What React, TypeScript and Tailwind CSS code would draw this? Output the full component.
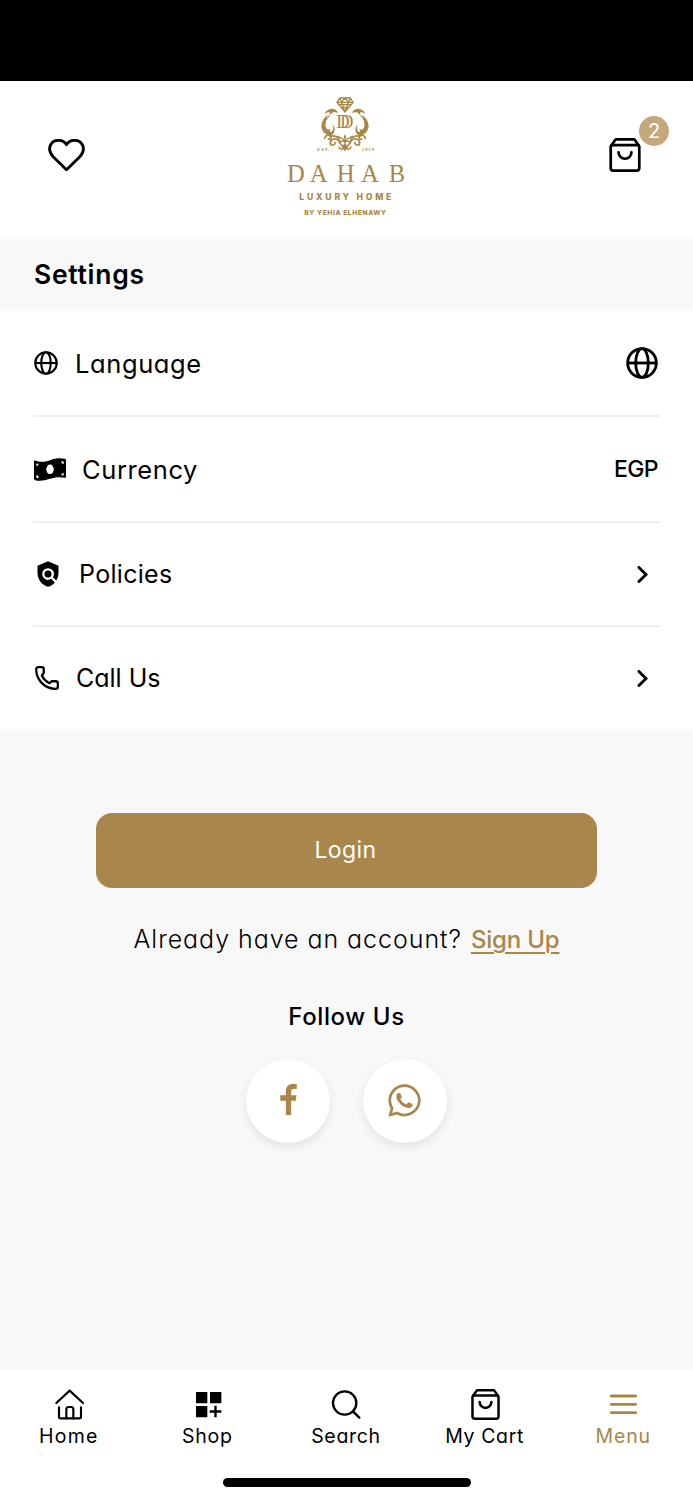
import React from 'react';
import { Phone } from 'lucide-react';
import { FaWhatsapp } from 'react-icons/fa';
import { MdPolicy } from 'react-icons/md';

interface IconProps {
  className?: string;
}

const HeartIcon = ({ className }: IconProps) => (
  <svg viewBox="0 0 110 96" fill="none" stroke="currentColor" strokeWidth="8.5" strokeLinejoin="round" className={className}>
    <path d="M55 92 15 53C-6 30 7 4 32 4c10 0 18 5 23 13C60 9 68 4 78 4c25 0 38 26 17 49Z" />
  </svg>
);

const BagIcon = ({ className }: IconProps) => (
  <svg viewBox="0 0 92 100" fill="none" stroke="currentColor" strokeWidth="8" strokeLinecap="round" strokeLinejoin="round" className={className}>
    <path d="M4 25v63a8 8 0 0 0 8 8h68a8 8 0 0 0 8-8V25L75 6q-1-2-4-2H21q-3 0-4 2Z" />
    <path d="M6 21h80M27 42a19 19 0 0 0 38 0" />
  </svg>
);

const GlobeIcon = ({ className }: IconProps) => (
  <svg viewBox="0 0 96 96" fill="none" stroke="currentColor" strokeWidth="8.5" className={className}>
    <circle cx="48" cy="48" r="43" />
    <ellipse cx="48" cy="48" rx="19" ry="43" />
    <path d="M5 48h86" />
  </svg>
);

const BillIcon = ({ className }: IconProps) => (
  <svg viewBox="0 0 94 67" className={className}>
    <path d="M2 7c18 6 29 4 45-1C64 0 76-1 91 2q3 1 3 4v49q0 4-4 3c-16-3-27-2-43 3-17 5-29 8-44 4q-3-1-3-4V9q0-3 2-2Z" fill="currentColor" />
    <ellipse cx="47" cy="33" rx="11" ry="14" fill="#fff" />
    <path d="M7 16q4 1 7 0 0 6-7 8ZM80 10q3-1 7 0v8q-7-1-7-8ZM7 50q7 1 7 8-4 1-7 0ZM87 43v8q-4-1-7 0 0-6 7-8Z" fill="#fff" />
  </svg>
);

const ChevronIcon = () => (
  <svg viewBox="0 0 30 48" fill="none" stroke="currentColor" strokeWidth="8" strokeLinecap="round" className="mr-3 h-[17px] w-[11px]">
    <path d="m5 4 20 20L5 44" />
  </svg>
);

const FacebookIcon = ({ className }: IconProps) => (
  <svg viewBox="0 0 50 94" fill="currentColor" className={className}>
    <path d="M17 94V51H0V34h17V23C17 8 25 0 39 0h11v15h-8c-7 0-9 3-9 9v10h16l-2 17H33v43Z" />
  </svg>
);

const HomeIcon = ({ className }: IconProps) => (
  <svg viewBox="0 0 108 108" fill="none" stroke="currentColor" strokeWidth="6.5" strokeLinecap="round" strokeLinejoin="round" className={className}>
    <path d="m16 51 40-37 40 37M24 64v28q0 5 5 5h56q5 0 5-5V64" />
    <path d="M46 97V70q0-7 7-7h7q7 0 7 7v27" />
  </svg>
);

const ShopIcon = ({ className }: IconProps) => (
  <svg viewBox="0 0 108 108" fill="currentColor" className={className}>
    <path d="M18 18h34v34H18zM60 18h34v34H60zM18 60h34v34H18zM73 59h7v14h14v7H80v14h-7V80H59v-7h14z" />
  </svg>
);

const SearchIcon = ({ className }: IconProps) => (
  <svg viewBox="0 0 108 108" fill="none" stroke="currentColor" strokeWidth="7" strokeLinecap="round" className={className}>
    <circle cx="50" cy="51" r="35" />
    <path d="m75 76 19 19" />
  </svg>
);

const CartIcon = ({ className }: IconProps) => (
  <span className={`flex items-center justify-center ${className}`}>
    <BagIcon className="h-[31px] w-[29px]" />
  </span>
);

const MenuIcon = ({ className }: IconProps) => (
  <svg viewBox="0 0 108 108" fill="none" stroke="currentColor" strokeWidth="8.5" strokeLinecap="round" className={className}>
    <path d="M16 30h73M16 55h73M16 80h73" />
  </svg>
);

// one side of the wreath, drawn again mirrored for the other side
const Scroll = () => (
  <g>
    <path d="M205 84c-5-9-14-14-24-12-9 2-14 8-17 15 6-5 11-6 16-5-3 3-1 7 3 7 1-5 4-7 9-7 5-1 9 0 13 2Z" />
    <path d="M175 88c-12 9-20 20-20 34 0 12 7 20 17 21 7 0 11-6 8-12-3 4-8 4-11-1-5-8-3-27 6-42Z" />
    <path d="M154 119c1 20 11 31 27 31 9 0 12-9 7-15-1 6-7 8-14 4-8-4-14-10-20-20Z" />
    <path d="M187 118c9 10 9 23 0 30-6 5-13 5-19 3 11-1 18-7 20-14 2-6 1-12-1-19Z" />
    <g fill="none" stroke="#a98645" strokeLinecap="round">
      <path d="M178 91q-15 16-16 34" strokeWidth="3" />
      <path d="M164 160c1-9 11-12 17-7 5 5 0 12-6 9M180 154c12-4 25 1 28 12" strokeWidth="5" />
      <path d="M183 180c-6-11 5-22 17-17 12 4 12 21 22 26M183 179c6 4 13 0 12-7" strokeWidth="5" />
      <path d="M203 154c7 7 18 4 22 14M208 173c6-7 13-6 17-1M207 186c2 9 12 8 15 1" strokeWidth="4.5" />
    </g>
    <path d="M225 174c-8 5-8 17 0 24ZM225 148c-5 6-4 12 0 16Z" />
  </g>
);

const Logo = () => (
  <svg viewBox="0 0 450 420" className="h-[140px] w-[150px]" fill="#a98645">
    <g fill="none" stroke="#a98645" strokeWidth="4">
      <path d="M209 39h32l8 13-24 29-24-29ZM201 52h48M209 39l5 13 11-13 11 13 5-13M214 52l11 28 11-28M207 59h36M213 67h24" />
    </g>
    <Scroll />
    <g transform="translate(450 0) scale(-1 1)">
      <Scroll />
    </g>
    <text x="199 210" y="130" fontFamily="Liberation Serif, serif" fontSize="56">
      DD
    </text>
    <text x="142" y="199" textLength="37" fontFamily="Liberation Serif, serif" fontSize="14" fontWeight="700">EST.</text>
    <text x="275" y="199" textLength="37" fontFamily="Liberation Serif, serif" fontSize="14" fontWeight="700">1959</text>
    <text x="51 119 200 273 356" y="291" fontFamily="Liberation Serif, serif" fontSize="74">DAHAB</text>
    <text x="88" y="345" textLength="276" fontFamily="Inter, sans-serif" fontSize="26" fontWeight="800">LUXURY HOME</text>
    <text x="103" y="389" textLength="245" fontFamily="Inter, sans-serif" fontSize="20" fontWeight="800">BY YEHIA ELHENAWY</text>
  </svg>
);

const SETTINGS = [
  {
    label: 'Language',
    icon: <GlobeIcon className="mr-[17px] ml-px size-6" />,
    row: 'h-[106px] border-b-2',
    text: 'text-[25.5px] tracking-[0.6px]',
    value: <GlobeIcon className="mr-0.5 size-8" />,
  },
  {
    label: 'Currency',
    icon: <BillIcon className="mr-4 ml-px h-[23px] w-8" />,
    row: 'h-[106px] border-b-2',
    text: 'text-[25.5px] tracking-[0.6px]',
    value: <span className="mr-0.5 text-[23px] font-medium tracking-[-0.6px]">EGP</span>,
  },
  {
    label: 'Policies',
    icon: <MdPolicy className="mr-[17px] ml-px size-7" />,
    row: 'h-[104px] border-b-2',
    text: 'text-[25px] tracking-[0.3px]',
    value: <ChevronIcon />,
  },
  {
    label: 'Call Us',
    icon: <Phone strokeWidth={2.1} className="mr-4 ml-px size-[26px]" />,
    row: 'h-[102px]',
    text: 'text-[25px]',
    value: <ChevronIcon />,
  },
];

const TABS = [
  { label: 'Home', Icon: HomeIcon, color: 'text-black', text: 'tracking-[1.2px]' },
  { label: 'Shop', Icon: ShopIcon, color: 'text-black', text: 'tracking-[0.8px]' },
  { label: 'Search', Icon: SearchIcon, color: 'text-black', text: 'tracking-[0.7px]' },
  { label: 'My Cart', Icon: CartIcon, color: 'text-black', text: 'tracking-[0.6px]' },
  { label: 'Menu', Icon: MenuIcon, color: 'text-[#a9864b]', text: 'tracking-[0.8px]' },
];

export default function App() {
  return (
    <div className="flex h-[1500px] w-[693px] flex-col overflow-hidden bg-[#f8f8f8] font-[Inter,sans-serif] text-black [font-feature-settings:'cv11']">
      <div className="h-[81px] shrink-0 bg-black" />

      {/* Header */}
      <header className="flex h-[158px] shrink-0 items-start justify-between bg-white pr-[52px] pl-12">
        <HeartIcon className="mt-[58px] h-8 w-[37px]" />
        <div className="mt-1 mr-[5px]">
          <Logo />
        </div>
        <button className="relative mt-[57px]">
          <BagIcon className="h-[34px] w-8" />
          <span className="absolute -top-[22px] -right-7 flex size-[30px] items-center justify-center rounded-full bg-[#c5a77c] text-[20px] text-white">
            2
          </span>
        </button>
      </header>

      <h1 className="flex h-[72px] shrink-0 items-center pl-[34px] text-[26.5px] font-semibold tracking-[0.7px]">Settings</h1>

      {/* Settings list */}
      <section className="bg-white px-[33px]">
        {SETTINGS.map((item) => (
          <div key={item.label} className={`flex items-center justify-between border-[#efefef] ${item.row}`}>
            <div className="flex items-center">
              {item.icon}
              <span className={`pt-0.5 ${item.text}`}>{item.label}</span>
            </div>
            {item.value}
          </div>
        ))}
      </section>

      {/* Account */}
      <main className="flex flex-1 flex-col items-center">
        <button className="mt-[84px] h-[75px] w-[501px] rounded-2xl bg-[#a9864b] pr-0.5 text-[23px] tracking-[0.4px] text-white">
          Login
        </button>
        <p className="mt-[34px] flex h-9 items-center gap-[9px] text-[25px] font-light">
          <span className="tracking-[0.95px]">Already have an account?</span>
          <a className="text-[24px] font-medium tracking-[-0.2px] text-[#a9864b] underline decoration-2 underline-offset-4">Sign Up</a>
        </p>
        <h2 className="mt-[41px] flex h-9 items-center text-[24px] font-medium tracking-[0.6px]">Follow Us</h2>
        <div className="mt-6 flex gap-[33px] text-[#a9864b]">
          <a className="flex size-[84px] items-center justify-center rounded-full bg-white shadow-[0_4px_10px_rgba(0,0,0,0.09)]">
            <FacebookIcon className="mb-1 h-[31px] w-[17px]" />
          </a>
          <a className="flex size-[84px] items-center justify-center rounded-full bg-white shadow-[0_4px_10px_rgba(0,0,0,0.09)]">
            <FaWhatsapp className="mr-0.5 mb-0.5 size-[37px]" />
          </a>
        </div>
      </main>

      {/* Bottom navigation */}
      <nav className="h-[130px] shrink-0 bg-white pt-4">
        <div className="grid h-[92px] grid-cols-5">
          {TABS.map(({ label, Icon, color, text }) => (
            <a key={label} className={`flex flex-col items-center ${color}`}>
              <Icon className="size-9" />
              <span className={`-mt-0.5 pr-px text-[19.5px] leading-8 ${text}`}>{label}</span>
            </a>
          ))}
        </div>
        <div className="mx-auto h-[9px] w-[248px] rounded-full bg-black" />
      </nav>
    </div>
  );
}
